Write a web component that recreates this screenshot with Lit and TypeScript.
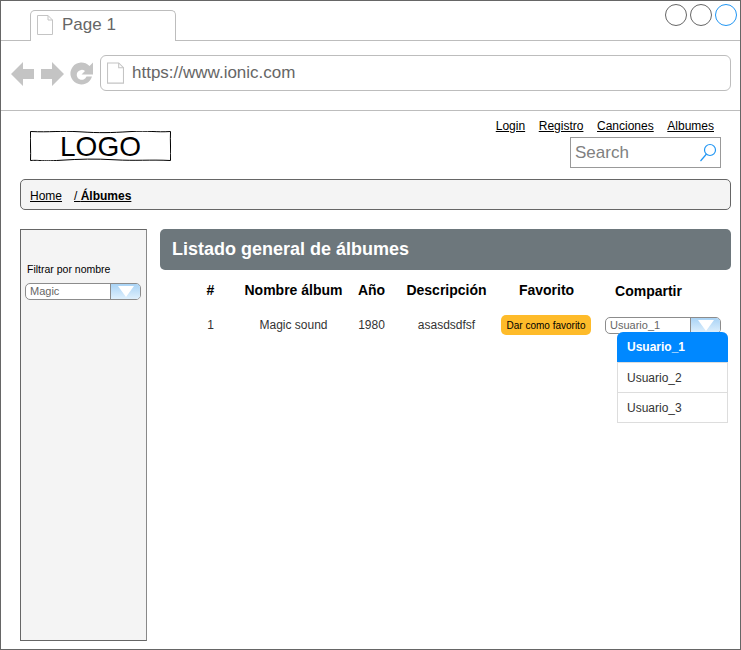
import { LitElement, css, html, svg } from 'lit';
import { customElement } from 'lit/decorators.js';

const pageIcon = (w: number, h: number, stroke: string) => html`
  <svg class="page-icon" width=${w} height=${h} viewBox="0 0 16 20" fill="none">
    <path d="M.5.5h10.5l4.500 4.500v14.500h-15z" fill="#fff" stroke=${stroke} />
    <path d="M11 .5v4.500h4.500" stroke=${stroke} />
  </svg>
`;

const comboArrow = svg`<path d="M3 1h16l-8 11z" fill="#fff" />`;

@customElement('app-root')
export class AppRoot extends LitElement {
  static styles = css`
    :host {
      display: block;
      width: 741px;
      height: 650px;
      font-family: 'Liberation Sans', Arial, sans-serif;
      color: #000;
    }

    * {
      box-sizing: border-box;
    }

    .frame {
      width: 741px;
      height: 650px;
      border: 1px solid #666;
      background: #fff;
      display: flex;
      flex-direction: column;
      overflow: hidden;
    }

    /* browser chrome */
    .tabbar {
      height: 40px;
      flex: none;
      border-bottom: 1px solid #bdbdbd;
      display: flex;
      justify-content: space-between;
      padding: 9px 0 0 29px;
    }

    .tab {
      width: 146px;
      height: 31px;
      border: 1px solid #bdbdbd;
      border-bottom: none;
      border-radius: 5px 5px 0 0;
      background: #fff;
      display: flex;
      align-items: center;
      gap: 9px;
      padding: 0 0 2px 6px;
      font-size: 17px;
      color: #666;
    }

    .win-buttons {
      display: flex;
      gap: 3px;
      margin: -6px 3px 0 0;
      height: 22px;
    }

    .win-buttons span {
      width: 22px;
      height: 22px;
      border: 1px solid #666;
      border-radius: 50%;
    }

    .win-buttons span.active {
      border-color: #2196f3;
    }

    .addressbar {
      height: 70px;
      flex: none;
      border-bottom: 1px solid #bdbdbd;
      display: flex;
      align-items: flex-start;
      padding: 14px 9px 0 10px;
    }

    .nav-icons {
      display: flex;
      margin-top: 6px;
      width: 89px;
      flex: none;
    }

    .address {
      flex: 1;
      height: 36px;
      border: 1px solid #bdbdbd;
      border-radius: 6px;
      display: flex;
      align-items: center;
      gap: 8px;
      padding: 0 0 0 6px;
      font-size: 17px;
      color: #666;
    }

    /* site header */
    .header {
      height: 68px;
      flex: none;
      display: flex;
      justify-content: space-between;
      padding: 0 19px 0 29px;
    }

    .logo {
      position: relative;
      width: 141px;
      height: 30px;
      margin-top: 20px;
      display: flex;
      justify-content: center;
      align-items: center;
      padding: 1px 0 0 0;
      font-size: 28px;
      line-height: 30px;
    }

    .logo svg {
      position: absolute;
      inset: 0;
    }

    .header-right {
      display: flex;
      flex-direction: column;
      align-items: flex-end;
    }

    .links {
      display: flex;
      gap: 13.6px;
      font-size: 12px;
      line-height: 14px;
      padding: 8px 7px 0 0;
    }

    .links a {
      color: #000;
      text-decoration: underline;
    }

    .search {
      width: 151px;
      height: 31px;
      margin-top: 4px;
      border: 1px solid #999;
      display: flex;
      align-items: center;
      justify-content: space-between;
      padding: 0 3px 0 4px;
      font-size: 17px;
      color: #808080;
    }

    .crumbs {
      height: 31px;
      flex: none;
      margin: 0 9px 0 19px;
      border: 1px solid #666;
      border-radius: 5px;
      background: #f4f4f4;
      display: flex;
      align-items: center;
      gap: 12px;
      padding: 2px 0 0 9px;
      font-size: 12px;
    }

    .crumbs a {
      color: #000;
      text-decoration: underline;
    }

    .crumbs .current {
      font-weight: bold;
    }

    .crumbs .sep {
      font-weight: normal;
    }

    /* content */
    .content {
      flex: 1;
      display: flex;
      gap: 13px;
      padding: 19px 9px 8px 19px;
      min-height: 0;
    }

    .sidebar {
      width: 127px;
      flex: none;
      border: 1px solid #666;
      border-right-color: #888;
      background: #f4f4f4;
      padding: 33px 5px 0 4px;
      font-size: 10.5px;
    }

    .sidebar label {
      display: block;
      padding-left: 2px;
      margin-bottom: 7px;
      line-height: 13px;
    }

    .combo {
      display: flex;
      height: 17px;
      border: 1px solid #8c8c8c;
      border-radius: 5px;
      background: #fff;
      overflow: hidden;
      font-size: 11px;
      color: #666;
      text-align: left;
    }

    .combo .value {
      flex: 1;
      padding-left: 4px;
      line-height: 15px;
    }

    .combo .arrow {
      width: 30px;
      flex: none;
      border-left: 1px solid #8c8c8c;
      background: linear-gradient(#a9d3f5, #dff0fd);
      display: flex;
      justify-content: center;
      align-items: center;
    }

    .main {
      flex: 1;
      min-width: 0;
    }

    .title {
      height: 41px;
      border-radius: 5px;
      background: #6d777c;
      color: #fff;
      font-size: 18px;
      font-weight: bold;
      display: flex;
      align-items: center;
      padding: 0 0 0 12px;
    }

    .table {
      display: grid;
      grid-template-columns: 50px 116px 40px 110px 90px 140px;
      margin-left: 25px;
    }

    .cell {
      display: flex;
      justify-content: center;
      align-items: center;
      text-align: center;
      padding-left: 1px;
    }

    .th {
      height: 40px;
      font-size: 14px;
      font-weight: bold;
      white-space: nowrap;
    }

    .th.share {
      padding: 2px 25px 0 0;
    }

    .td {
      height: 30px;
      font-size: 12px;
      color: #333;
    }

    .td.fav-cell {
      padding-left: 0;
    }

    .fav {
      width: 90px;
      height: 20px;
      border-radius: 5px;
      background: #febb2a;
      color: #000;
      font-size: 10px;
      display: flex;
      align-items: center;
      justify-content: center;
    }

    .share-cell {
      position: relative;
      justify-content: flex-start;
      padding-left: 14px;
    }

    .share-cell .combo {
      width: 116px;
    }

    .menu {
      position: absolute;
      left: 26px;
      top: 22px;
      width: 111px;
      border: 1px solid #ddd;
      border-top: none;
      border-radius: 6px 6px 0 0;
      background: #fff;
      font-size: 12px;
      text-align: left;
      z-index: 2;
    }

    .menu div {
      height: 30px;
      padding-left: 9px;
      display: flex;
      align-items: center;
      color: #333;
      border-top: 1px solid #ddd;
    }

    .menu div.selected {
      background: #0088ff;
      color: #fff;
      font-weight: bold;
      border: none;
      border-radius: 6px 6px 0 0;
      margin: 0 -1px;
      padding-left: 10px;
    }
  `;

  private combo(value: string) {
    return html`
      <div class="combo">
        <div class="value">${value}</div>
        <div class="arrow">
          <svg width="22" height="13" viewBox="0 0 22 13">${comboArrow}</svg>
        </div>
      </div>
    `;
  }

  override render() {
    return html`
      <div class="frame">
        <div class="tabbar">
          <div class="tab">${pageIcon(16, 20, '#c4c4c4')}<span>Page 1</span></div>
          <div class="win-buttons">
            <span></span><span></span><span class="active"></span>
          </div>
        </div>

        <div class="addressbar">
          <div class="nav-icons">
            <svg width="84" height="26" viewBox="0 0 84 26" fill="#c4c4c4">
              <path d="M0 13 12 1v7h11v10h-11v7z" />
              <path d="M53 13 41 1v7h-11v10h11v7z" />
              <path d="M81 15.500a11 11 0 1 1-2.500-10.500l3.500-3.500v12h-11.500l3.500-3.500a5 5 0 1 0 1.500 5.500z" />
            </svg>
          </div>
          <div class="address">
            ${pageIcon(17, 22, '#c4c4c4')}<span>https://www.ionic.com</span>
          </div>
        </div>

        <div class="header">
          <div class="logo">
            <svg width="141" height="30" viewBox="0 0 141 30" fill="none" stroke="#000">
              <path
                d="M.5 .5C20 1.500 30 -.5 50 .8S80 1.800 100 .6 125 1.500 140.500 .5C140 10 141 20 140.500 29.500 120 28.500 105 30 85 28.800S50 28 30 29.300 10 28.800 .5 29.500C1 20 0 10 .5 .5Z"
              />
            </svg>
            <span>LOGO</span>
          </div>
          <div class="header-right">
            <div class="links">
              <a>Login</a><a>Registro</a><a>Canciones</a><a>Albumes</a>
            </div>
            <div class="search">
              <span>Search</span>
              <svg width="18" height="19" viewBox="0 0 18 19" fill="none" stroke="#2196f3" stroke-width="1.200">
                <circle cx="11" cy="7" r="5.500" />
                <path d="M7.500 11 1.500 18" />
              </svg>
            </div>
          </div>
        </div>

        <div class="crumbs">
          <a>Home</a>
          <a class="current"><span class="sep">/ </span>Álbumes</a>
        </div>

        <div class="content">
          <div class="sidebar">
            <label>Filtrar por nombre</label>
            ${this.combo('Magic')}
          </div>

          <div class="main">
            <div class="title">Listado general de álbumes</div>
            <div class="table">
              <div class="cell th">#</div>
              <div class="cell th">Nombre álbum</div>
              <div class="cell th">Año</div>
              <div class="cell th">Descripción</div>
              <div class="cell th">Favorito</div>
              <div class="cell th share">Compartir</div>

              <div class="cell td">1</div>
              <div class="cell td">Magic sound</div>
              <div class="cell td">1980</div>
              <div class="cell td">asasdsdfsf</div>
              <div class="cell td fav-cell"><div class="fav">Dar como favorito</div></div>
              <div class="cell td share-cell">
                ${this.combo('Usuario_1')}
                <div class="menu">
                  <div class="selected">Usuario_1</div>
                  <div>Usuario_2</div>
                  <div>Usuario_3</div>
                </div>
              </div>
            </div>
          </div>
        </div>
      </div>
    `;
  }
}
